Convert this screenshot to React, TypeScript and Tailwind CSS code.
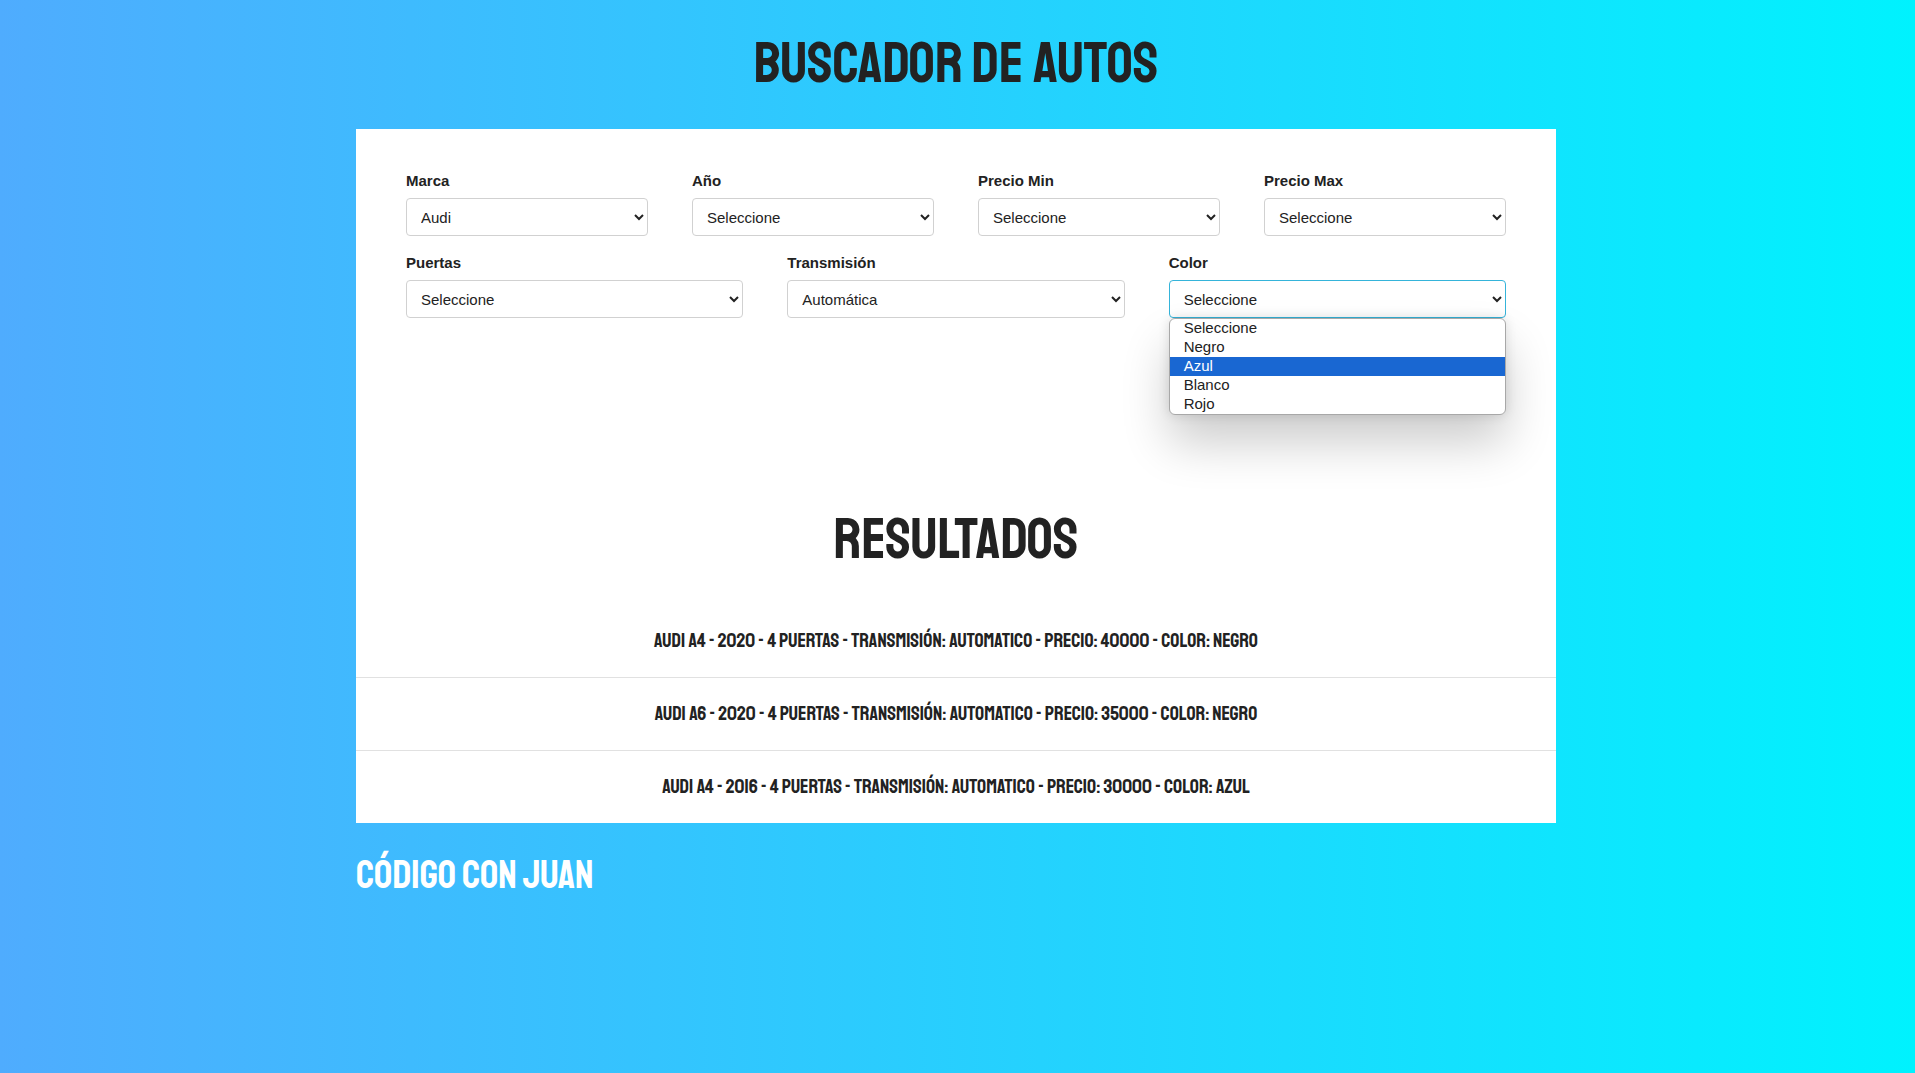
const range = (from: number, to: number, step: number) => {
  const out: string[] = [];
  for (let n = from; n <= to; n += step) out.push(String(n));
  return out;
};

const COLORS = ['Seleccione', 'Negro', 'Azul', 'Blanco', 'Rojo'];

const RESULTS = [
  'Audi A4 - 2020 - 4 Puertas - Transmisión: Automatico - Precio: 40000 - Color: Negro',
  'Audi A6 - 2020 - 4 Puertas - Transmisión: Automatico - Precio: 35000 - Color: Negro',
  'Audi A4 - 2016 - 4 Puertas - Transmisión: Automatico - Precio: 30000 - Color: Azul',
];

type FieldProps = {
  id: string;
  label: string;
  options: string[];
  value?: string;
  open?: boolean;
  highlighted?: string;
};

function Field({ id, label, options, value = 'Seleccione', open = false, highlighted }: FieldProps) {
  return (
    <div className="relative flex-1">
      <label htmlFor={id} className="mb-[5px] block text-[15px] leading-6 font-bold">
        {label}
      </label>
      <select
        id={id}
        defaultValue={value}
        className={
          open
            ? 'block h-[38px] w-full rounded border border-[#35b4da] bg-white px-2.5 text-[15px] outline-none'
            : 'block h-[38px] w-full rounded border border-[#d1d1d1] bg-white px-2.5 text-[15px] outline-none'
        }
      >
        {options.map((o) => (
          <option key={o}>{o}</option>
        ))}
      </select>
      {open && (
        <ul
          role="listbox"
          aria-label={label}
          className="absolute inset-x-0 top-full z-10 overflow-hidden rounded-md border border-[#a8a8a8] bg-white text-[15px] leading-[17px] shadow-[0_0_12px_rgba(0,0,0,0.12),0_28px_48px_rgba(0,0,0,0.2)]"
        >
          {options.map((o) => (
            <li
              key={o}
              role="option"
              aria-selected={o === highlighted}
              className={o === highlighted ? 'h-[19px] bg-[#1967d2] px-3.5 text-white' : 'h-[19px] px-3.5'}
            >
              {o}
            </li>
          ))}
        </ul>
      )}
    </div>
  );
}

export default function App() {
  return (
    <div className="min-h-screen bg-linear-to-r/srgb from-[#4facfe] to-[#00f2fe] pr-[3px] font-['Liberation_Sans',Arial,sans-serif] text-[#222]">
      <h1 className="pt-[27px] pb-[30px] text-center font-['Staatliches',sans-serif] text-[58px] leading-[72px]">
        Buscador de Autos
      </h1>

      <main className="mx-auto max-w-[1200px] bg-white pt-10">
        <form className="flex flex-col gap-[15px] px-[50px]">
          <div className="flex gap-11">
            <Field id="marca" label="Marca" value="Audi" options={['Seleccione', 'Audi', 'BMW', 'Chevrolet', 'Ford']} />
            <Field id="year" label="Año" options={['Seleccione', ...range(2010, 2020, 1)]} />
            <Field id="minimo" label="Precio Min" options={['Seleccione', ...range(20000, 60000, 10000)]} />
            <Field id="maximo" label="Precio Max" options={['Seleccione', ...range(20000, 60000, 10000)]} />
          </div>
          <div className="flex gap-11">
            <Field id="puertas" label="Puertas" options={['Seleccione', '2', '4']} />
            <Field
              id="transmision"
              label="Transmisión"
              value="Automática"
              options={['Seleccione', 'Automática', 'Manual']}
            />
            <Field id="color" label="Color" options={COLORS} open highlighted="Azul" />
          </div>
        </form>

        <h2 className="pt-[185px] pb-[30px] text-center font-['Staatliches',sans-serif] text-[58px] leading-[72px]">
          Resultados
        </h2>
        <div className="divide-y divide-[#e1e1e1] text-center font-['Staatliches',sans-serif] text-[20px] leading-8">
          {RESULTS.map((r) => (
            <p key={r} className="py-5">
              {r}
            </p>
          ))}
        </div>
      </main>

      <footer className="mx-auto max-w-[1200px] pt-[25px] font-['Staatliches',sans-serif] text-[40px] leading-[54px] text-white">
        Código con Juan
      </footer>
    </div>
  );
}
